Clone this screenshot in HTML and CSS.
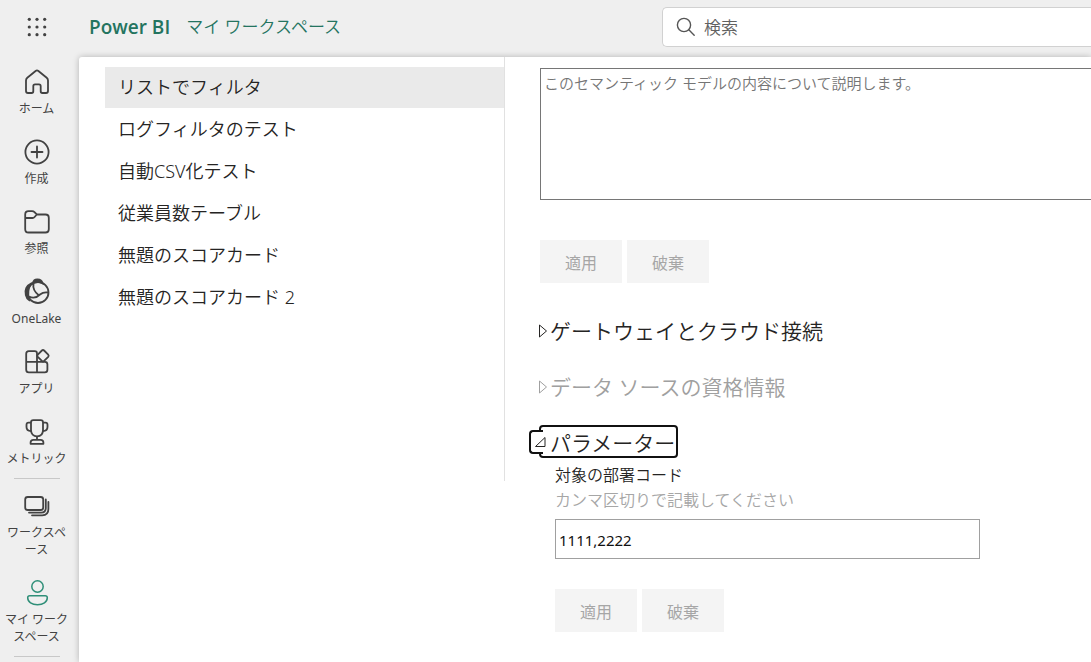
FILE: index.html
```html
<!DOCTYPE html>
<html lang="ja">
<head>
    <meta charset="UTF-8">
    <meta name="viewport" content="width=device-width, initial-scale=1.0">
    <title>Power BI</title>
    <link rel="stylesheet" href="styles.css">
</head>
<body>
    <header class="topbar">
        <button class="launcher" type="button" aria-label="アプリ起動ツール">
            <svg width="20" height="20" viewBox="0 0 20 20" fill="#424242">
                <circle cx="2.3" cy="2.3" r="1.6"/><circle cx="10" cy="2.3" r="1.6"/><circle cx="17.7" cy="2.3" r="1.6"/>
                <circle cx="2.3" cy="10" r="1.6"/><circle cx="10" cy="10" r="1.6"/><circle cx="17.7" cy="10" r="1.6"/>
                <circle cx="2.3" cy="17.7" r="1.6"/><circle cx="10" cy="17.7" r="1.6"/><circle cx="17.7" cy="17.7" r="1.6"/>
            </svg>
        </button>
        <div class="titles">
            <a class="brand" href="#">Power BI</a>
            <a class="workspace" href="#">マイ ワークスペース</a>
        </div>
        <label class="search">
            <svg width="20" height="20" viewBox="0 0 20 20" fill="none" stroke="#555" stroke-width="1.4" stroke-linecap="round">
                <circle cx="8" cy="8" r="6.6"/>
                <path d="M12.8 12.8L18.2 18.2"/>
            </svg>
            <input type="search" placeholder="検索" aria-label="検索">
        </label>
    </header>

    <div class="page">
        <nav class="sidebar">
            <a class="nav-item" href="#">
                <svg width="28" height="28" viewBox="0 0 28 28" fill="none" stroke="#424242" stroke-width="1.8" stroke-linejoin="round">
                    <path d="M12.6 3L4.3 9.7Q3 10.8 3 12.4V23Q3 25 5 25H8.6Q10.3 25 10.3 23.3V18.2Q10.3 16.4 12 16.4H16Q17.7 16.4 17.7 18.2V23.3Q17.7 25 19.4 25H23Q25 25 25 23V12.4Q25 10.8 23.7 9.7L15.4 3Q14 1.900 12.6 3Z"/>
                </svg>
                <span>ホーム</span>
            </a>
            <a class="nav-item" href="#">
                <svg width="28" height="28" viewBox="0 0 28 28" fill="none" stroke="#424242" stroke-width="1.8" stroke-linecap="round">
                    <circle cx="14" cy="14" r="11.6"/>
                    <path d="M14 8.500V19.500M8.500 14H19.500"/>
                </svg>
                <span>作成</span>
            </a>
            <a class="nav-item" href="#">
                <svg width="28" height="28" viewBox="0 0 28 28" fill="none" stroke="#424242" stroke-width="1.8" stroke-linejoin="round">
                    <path d="M2.200 10V6.500Q2.200 3.200 5.500 3.200H9Q10.500 3.200 11.500 4.200L13.800 6.500H22.500Q25.800 6.500 25.800 9.800V21.200Q25.800 24.500 22.500 24.500H5.500Q2.200 24.500 2.200 21.200ZM2.200 10H9.500Q10.800 10 11.600 9L13.800 6.500"/>
                </svg>
                <span>参照</span>
            </a>
            <a class="nav-item" href="#">
                <svg width="28" height="28" viewBox="0 0 28 28" fill="none" stroke="#424242" stroke-width="1.8">
                    <path d="M8 5.500C3.500 7.500 1.500 12 2.800 17C3.500 19.800 4.800 21.300 6 22C4.800 17 5 10.500 8 5.500Z" fill="#424242"/>
                    <path d="M10 5C10.500 2.500 12.500 1.400 14.500 1.500C17 1.600 19 3 19.400 5.200C16.500 3.600 13 3.600 10 5Z" fill="#424242"/>
                    <circle cx="15" cy="14.500" r="10.500"/>
                    <path d="M10.500 5.500C9.500 11 12 14.500 16 17.500M6 18.500C10 20.500 14 19.500 17 16.500C19.500 14.500 22 14 25 14.500"/>
                </svg>
                <span>OneLake</span>
            </a>
            <a class="nav-item" href="#">
                <svg width="28" height="28" viewBox="0 0 28 28" fill="none" stroke="#424242" stroke-width="1.8" stroke-linejoin="round">
                    <path d="M14 13.800V5.500Q14 3.200 11.700 3.200H5.800Q3.200 3.200 3.200 5.800V21.700Q3.200 24.300 5.800 24.300H21.800Q24.400 24.300 24.400 21.700V16.300Q24.400 13.800 21.900 13.800H3.200M14 13.800V24.300"/>
                    <path d="M18.900 2.500Q20 1.400 21.100 2.500L25.200 6.600Q26.200 7.700 25.200 8.800L21.100 12.900Q20 14 18.900 12.900L14.800 8.800Q13.800 7.700 14.800 6.600Z"/>
                </svg>
                <span>アプリ</span>
            </a>
            <a class="nav-item" href="#">
                <svg width="28" height="28" viewBox="0 0 28 28" fill="none" stroke="#424242" stroke-width="1.8" stroke-linejoin="round">
                    <path d="M8 4.500Q8 2.200 10.300 2.200H17.700Q20 2.200 20 4.500V12C20 16 17.500 18.300 14 18.300C10.500 18.300 8 16 8 12Z"/>
                    <path d="M8 4.700H5.500Q3.500 4.700 3.500 6.700V9C3.500 12 5.500 13 8 13M20 4.700H22.500Q24.500 4.700 24.500 6.700V9C24.500 12 22.500 13 20 13M14 18.300V21.800"/>
                    <path d="M7.600 25.800V24.600Q7.600 21.800 10.400 21.800H17.600Q20.400 21.800 20.400 24.600V25.800Z"/>
                </svg>
                <span>メトリック</span>
            </a>
            <hr>
            <a class="nav-item" href="#">
                <svg width="28" height="28" viewBox="0 0 28 28" fill="none" stroke="#424242" stroke-width="1.8" stroke-linecap="round">
                    <rect x="2.200" y="5" width="18" height="13" rx="2.500"/>
                    <path d="M22.800 7.500V16Q22.800 20.600 18.200 20.600H6M25.400 10V17Q25.400 23.300 19.200 23.300H9"/>
                </svg>
                <span>ワークスペース</span>
            </a>
            <a class="nav-item" href="#">
                <svg width="28" height="28" viewBox="0 0 28 28" fill="none" stroke="#2f8f78" stroke-width="1.5">
                    <circle cx="14.500" cy="7.500" r="5.700"/>
                    <path d="M6.800 16.700H22.200Q24.300 16.700 24.300 18.800C24.300 23 20 25.700 14.500 25.700C9 25.700 4.700 23 4.700 18.800Q4.700 16.700 6.800 16.700Z"/>
                </svg>
                <span>マイ ワークスペース</span>
            </a>
            <hr>
        </nav>

        <main class="content">
            <ul class="models">
                <li><a class="selected" href="#">リストでフィルタ</a></li>
                <li><a href="#">ログフィルタのテスト</a></li>
                <li><a href="#">自動CSV化テスト</a></li>
                <li><a href="#">従業員数テーブル</a></li>
                <li><a href="#">無題のスコアカード</a></li>
                <li><a href="#">無題のスコアカード 2</a></li>
            </ul>

            <div class="settings">
                <textarea class="description" placeholder="このセマンティック モデルの内容について説明します。" aria-label="説明"></textarea>
                <div class="actions">
                    <button type="button" disabled>適用</button>
                    <button type="button" disabled>破棄</button>
                </div>

                <h2>
                    <button class="toggle" type="button" aria-expanded="false">
                        <svg width="13" height="16" viewBox="0 0 13 16" fill="none" stroke="currentColor"><path d="M4.500 2L11.500 8L4.500 14Z"/></svg>
                        <span>ゲートウェイとクラウド接続</span>
                    </button>
                </h2>
                <h2>
                    <button class="toggle" type="button" aria-expanded="false" disabled>
                        <svg width="13" height="16" viewBox="0 0 13 16" fill="none" stroke="currentColor"><path d="M4.500 2L11.500 8L4.500 14Z"/></svg>
                        <span>データ ソースの資格情報</span>
                    </button>
                </h2>
                <h2>
                    <button class="toggle active" type="button" aria-expanded="true">
                        <svg width="13" height="16" viewBox="0 0 13 16" fill="none" stroke="currentColor"><path d="M0.500 11.500H10V2.500Z"/></svg>
                        <span>パラメーター</span>
                    </button>
                </h2>

                <div class="parameters">
                    <label for="code">対象の部署コード</label>
                    <p>カンマ区切りで記載してください</p>
                    <input type="text" id="code" value="1111,2222">
                    <div class="actions">
                        <button type="button" disabled>適用</button>
                        <button type="button" disabled>破棄</button>
                    </div>
                </div>
            </div>
        </main>
    </div>
</body>
</html>
```
FILE: styles.css
```css
* {
    box-sizing: border-box;
}

body {
    font-family: "Noto Sans", "Noto Sans CJK JP", sans-serif;
    font-weight: 350;
    margin: 0;
    background-color: #efefef;
    color: #252423;
    min-height: 100vh;
    display: flex;
    flex-direction: column;
    overflow: hidden;
}

button, input, textarea {
    font-family: inherit;
    font-weight: inherit;
}

a {
    color: inherit;
    text-decoration: none;
}

/* top bar */
.topbar {
    display: flex;
    align-items: center;
    height: 56px;
    padding-bottom: 2px;
}

.launcher {
    width: 73px;
    height: 48px;
    padding: 0;
    border: none;
    background: none;
    display: flex;
    align-items: center;
    justify-content: center;
}

.titles {
    display: flex;
    align-items: center;
    gap: 16px;
    padding-left: 16px;
    flex: 0 0 60%;
    max-width: 589px;
    color: #24745f;
    line-height: 28px;
}

.brand {
    font-family: "Open Sans", sans-serif;
    font-size: 19px;
    font-weight: 600;
}

.workspace {
    font-size: 17px;
}

.search {
    flex: 1;
    height: 40px;
    display: flex;
    align-items: center;
    gap: 8px;
    padding-left: 13px;
    background-color: #fff;
    border: 1px solid #d1d1d1;
    border-right: none;
    border-radius: 5px 0 0 5px;
}

.search input {
    flex: 1;
    min-width: 0;
    padding: 0;
    border: none;
    outline: none;
    background: none;
    font-size: 17px;
}

.search input::placeholder {
    color: #616161;
}

/* left navigation */
.page {
    flex: 1;
    display: flex;
}

.sidebar {
    flex: 0 0 79px;
    padding: 2px 6px 0 0;
}

.nav-item {
    display: flex;
    flex-direction: column;
    align-items: center;
    gap: 4px;
    padding: 10px 2px 11px;
    font-size: 12px;
    font-weight: 400;
    line-height: 17px;
    color: #424242;
    text-align: center;
    line-break: loose;
}

.sidebar hr {
    width: 46px;
    margin: 0 auto 3px;
    border: none;
    border-top: 1px solid #c8c8c8;
}

/* content */
.content {
    flex: 1;
    min-width: 0;
    display: flex;
    align-items: flex-start;
    margin-top: 1px;
    background-color: #fff;
    border-top-left-radius: 3px;
    box-shadow: 0 0 6px rgba(0, 0, 0, 0.25);
}

.models {
    flex: 0 0 426px;
    height: 424px;
    margin: 0;
    padding: 10px 0 0 26px;
    list-style: none;
    border-right: 1px solid #e1e1e1;
}

.models a {
    display: block;
    margin-bottom: 1px;
    padding: 0 13px;
    font-size: 18px;
    line-height: 41px;
}

.models .selected {
    background-color: #eaeaea;
}

.settings {
    flex: 1;
    min-width: 0;
    padding: 11px 0 30px 35px;
}

.description {
    display: block;
    width: 100%;
    height: 132px;
    padding: 3px;
    border: 1px solid #767676;
    border-right: none;
    resize: none;
    font-size: 15px;
    line-height: 22px;
}

.description::placeholder {
    color: #757575;
}

.actions {
    display: flex;
    gap: 5px;
    margin: 40px 0 32px;
}

.actions button {
    height: 43px;
    padding: 0 25px;
    border: none;
    background-color: #f4f4f4;
    color: #a6a6a6;
    font-size: 16px;
    font-weight: 400;
}

h2 {
    display: flex;
    margin: 0 0 24px -5px;
    font-size: 21px;
    font-weight: inherit;
    line-height: 32px;
}

.toggle {
    position: relative;
    display: flex;
    align-items: center;
    gap: 2px;
    padding: 0;
    border: none;
    background: none;
    color: #252423;
    font-size: inherit;
    line-height: inherit;
}

.toggle:disabled {
    color: #a0a0a0;
}

.toggle svg, .toggle span {
    position: relative;
    z-index: 1;
}

/* focus frame: heading box plus the tab around the arrow */
.toggle.active::before, .toggle.active::after {
    content: "";
    position: absolute;
    border: 2px solid #111;
    border-radius: 4px;
}

.toggle.active::after {
    top: -2px;
    bottom: 1px;
    left: 4px;
    right: -3px;
}

.toggle.active::before {
    top: 3px;
    bottom: 5px;
    left: -6px;
    width: 12px;
    border-right: none;
    border-radius: 4px 0 0 4px;
    background-color: #fff;
    z-index: 1;
}

.parameters {
    margin-top: -20px;
    padding-left: 15px;
    font-size: 16px;
    line-height: 25px;
}

.parameters label {
    display: block;
}

.parameters p {
    margin: 0 0 6px;
    color: #a6a6a6;
}

.parameters input {
    display: block;
    width: 425px;
    max-width: 100%;
    height: 40px;
    padding: 2px 3px 0;
    border: 1px solid #a0a0a0;
    color: #111;
    font-size: 15px;
    font-weight: 400;
}

.parameters .actions {
    margin: 30px 0 0;
}
```
